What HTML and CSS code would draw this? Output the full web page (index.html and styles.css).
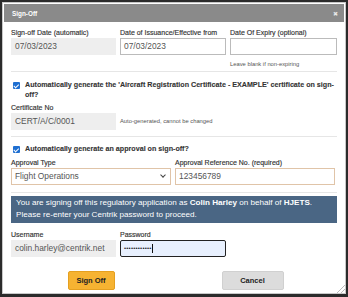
FILE: index.html
```html
<!DOCTYPE html>
<html lang="en">
<head>
    <meta charset="UTF-8">
    <meta name="viewport" content="width=device-width, initial-scale=1.0">
    <title>Sign-Off</title>
    <link rel="stylesheet" href="styles.css">
</head>
<body>
    <div class="dialog">
        <!-- Title bar -->
        <div class="title-bar">
            <span class="title">Sign-Off</span>
            <span class="close">&#10006;</span>
        </div>

        <div class="dialog-body">
            <!-- Dates -->
            <div class="row cols-3">
                <div class="field">
                    <label>Sign-off Date (automatic)</label>
                    <div class="input readonly">07/03/2023</div>
                </div>
                <div class="field">
                    <label>Date of Issuance/Effective from</label>
                    <div class="input">07/03/2023</div>
                </div>
                <div class="field">
                    <label>Date Of Expiry (optional)</label>
                    <div class="input"></div>
                    <div class="hint">Leave blank if non-expiring</div>
                </div>
            </div>

            <hr class="sep-1">

            <!-- Certificate -->
            <div class="check-row">
                <span class="checkbox"></span>
                <span class="check-label">Automatically generate the 'Aircraft Registration Certificate - EXAMPLE' certificate on sign-off?</span>
            </div>
            <div class="row cols-3 after-check">
                <div class="field">
                    <label>Certificate No</label>
                    <div class="input readonly">CERT/A/C/0001</div>
                </div>
                <div class="field span-2">
                    <label>&nbsp;</label>
                    <div class="hint inline">Auto-generated, cannot be changed</div>
                </div>
            </div>

            <hr class="sep-2">

            <!-- Approval -->
            <div class="check-row">
                <span class="checkbox"></span>
                <span class="check-label">Automatically generate an approval on sign-off?</span>
            </div>
            <div class="row cols-2 after-check">
                <div class="field">
                    <label>Approval Type</label>
                    <div class="input select warn">Flight Operations <span class="caret"></span></div>
                </div>
                <div class="field">
                    <label>Approval Reference No. (required)</label>
                    <div class="input warn">123456789</div>
                </div>
            </div>

            <hr class="sep-3">

            <div class="notice">
                You are signing off this regulatory application as <b>Colin Harley</b> on behalf of <b>HJETS</b>.<br>
                Please re-enter your Centrik password to proceed.
            </div>

            <!-- Credentials -->
            <div class="row cols-3">
                <div class="field">
                    <label>Username</label>
                    <div class="input readonly">colin.harley@centrik.net</div>
                </div>
                <div class="field">
                    <label>Password</label>
                    <div class="input password">&bull;&bull;&bull;&bull;&bull;&bull;&bull;&bull;&bull;&bull;&bull;&bull;<span class="cursor"></span></div>
                </div>
            </div>

            <div class="buttons">
                <div class="btn-cell"><button class="btn btn-primary">Sign Off</button></div>
                <div class="btn-cell"><button class="btn btn-default">Cancel</button></div>
            </div>
        </div>
        <span class="grip"></span>
    </div>
</body>
</html>
```

FILE: styles.css
```css
html, body {
    margin: 0;
    padding: 0;
}

body {
    font-family: 'Liberation Sans', Arial, sans-serif;
    background-color: #2b2b2b;
    color: #333;
}

.dialog {
    position: relative;
    box-sizing: border-box;
    width: 348px;
    height: 297px;
    border: 2px solid #2b2b2b;
    border-bottom-width: 3px;
    padding: 2px;
    background-color: #fff;
    box-shadow: inset 0 0 0 1px #c8c8c8;
}

.title-bar {
    display: flex;
    justify-content: space-between;
    align-items: center;
    height: 18px;
    padding: 0 6px 0 8px;
    background-color: #8a8a8a;
    color: #fff;
}

.title {
    font-size: 6.4px;
    font-weight: bold;
}

.close {
    font-size: 6px;
    color: #e8e8e8;
}

.dialog-body {
    padding: 6px 7px 0 7px;
}

.row {
    display: grid;
    column-gap: 4px;
}

.cols-3 {
    grid-template-columns: 105px 106px 107px;
}

.cols-2 {
    grid-template-columns: 160px 160px;
}

.span-2 {
    grid-column: span 2;
}

.after-check {
    margin-top: 3px;
}

.field label {
    display: block;
    font-size: 7px;
    line-height: 10px;
    color: #333;
    -webkit-text-stroke: 0.15px #333;
    white-space: nowrap;
}

.input {
    box-sizing: border-box;
    height: 17px;
    padding: 0 3px;
    border: 1px solid #bbb;
    font-size: 8.4px;
    line-height: 15px;
    color: #555;
    white-space: nowrap;
    overflow: hidden;
    background-color: #fff;
}

.input.readonly {
    background-color: #eee;
    border-color: #eee;
}

.input.warn {
    border-color: #e0c4a8;
}

.input.select {
    display: flex;
    justify-content: space-between;
    align-items: center;
}

.caret {
    width: 3px;
    height: 3px;
    border-right: 1.3px solid #444;
    border-bottom: 1.3px solid #444;
    transform: rotate(45deg);
    margin: -3px 2px 0 0;
}

.input.password {
    display: flex;
    align-items: center;
    border: 1px solid #222;
    border-radius: 2px;
    background-color: #e8f0fe;
    font-size: 6px;
    letter-spacing: 0.2px;
    color: #222;
}

.cursor {
    display: inline-block;
    width: 1px;
    height: 9px;
    background-color: #111;
}

.hint {
    font-size: 5.8px;
    line-height: 8px;
    color: #555;
    margin-top: 5px;
}

.hint.inline {
    margin-top: 0;
    line-height: 17px;
}

hr {
    border: 0;
    border-top: 1px solid #e6e6e6;
    margin: 0;
}

.sep-1 {
    margin: 3px 0 9px 0;
}

.sep-2 {
    margin: 6px 0 8px 0;
}

.sep-3 {
    margin: 7px 0 3px 0;
}

.check-row {
    display: flex;
    align-items: flex-start;
    gap: 5px;
    font-size: 7.15px;
    line-height: 9.5px;
    font-weight: bold;
    color: #333;
}

.checkbox {
    flex: none;
    position: relative;
    width: 7px;
    height: 7px;
    margin: 1px 0 0 2px;
    border-radius: 1px;
    background-color: #1f6fd1;
}

.checkbox::after {
    content: "";
    position: absolute;
    left: 2.3px;
    top: 0.6px;
    width: 1.6px;
    height: 3.6px;
    border-right: 1.2px solid #fff;
    border-bottom: 1.2px solid #fff;
    transform: rotate(45deg);
}

.check-label {
    -webkit-text-stroke: 0.1px #333;
}

.notice {
    padding: 1.5px 5px;
    background-color: #4a6684;
    color: #fff;
    font-size: 8.1px;
    line-height: 12px;
    margin-bottom: 7px;
}

.buttons {
    display: grid;
    grid-template-columns: 1fr 1fr;
    margin-top: 12px;
}

.btn-cell {
    text-align: center;
}

.btn {
    height: 19px;
    border-radius: 2px;
    font-family: 'Liberation Sans', Arial, sans-serif;
    font-size: 7.5px;
    font-weight: bold;
    color: #222;
    cursor: pointer;
}

.btn-primary {
    width: 47px;
    margin-left: -3px;
    background-color: #f6b332;
    border: 1px solid #e5a020;
}

.btn-default {
    width: 62px;
    margin-left: -6px;
    background-color: #dcdcdc;
    border: 1px solid #d0d0d0;
}

.grip {
    position: absolute;
    right: 1px;
    bottom: 1px;
    width: 8px;
    height: 8px;
    background: linear-gradient(135deg, transparent 45%, #bbb 45%, #bbb 55%, transparent 55%, transparent 70%, #bbb 70%, #bbb 80%, transparent 80%);
}
```
